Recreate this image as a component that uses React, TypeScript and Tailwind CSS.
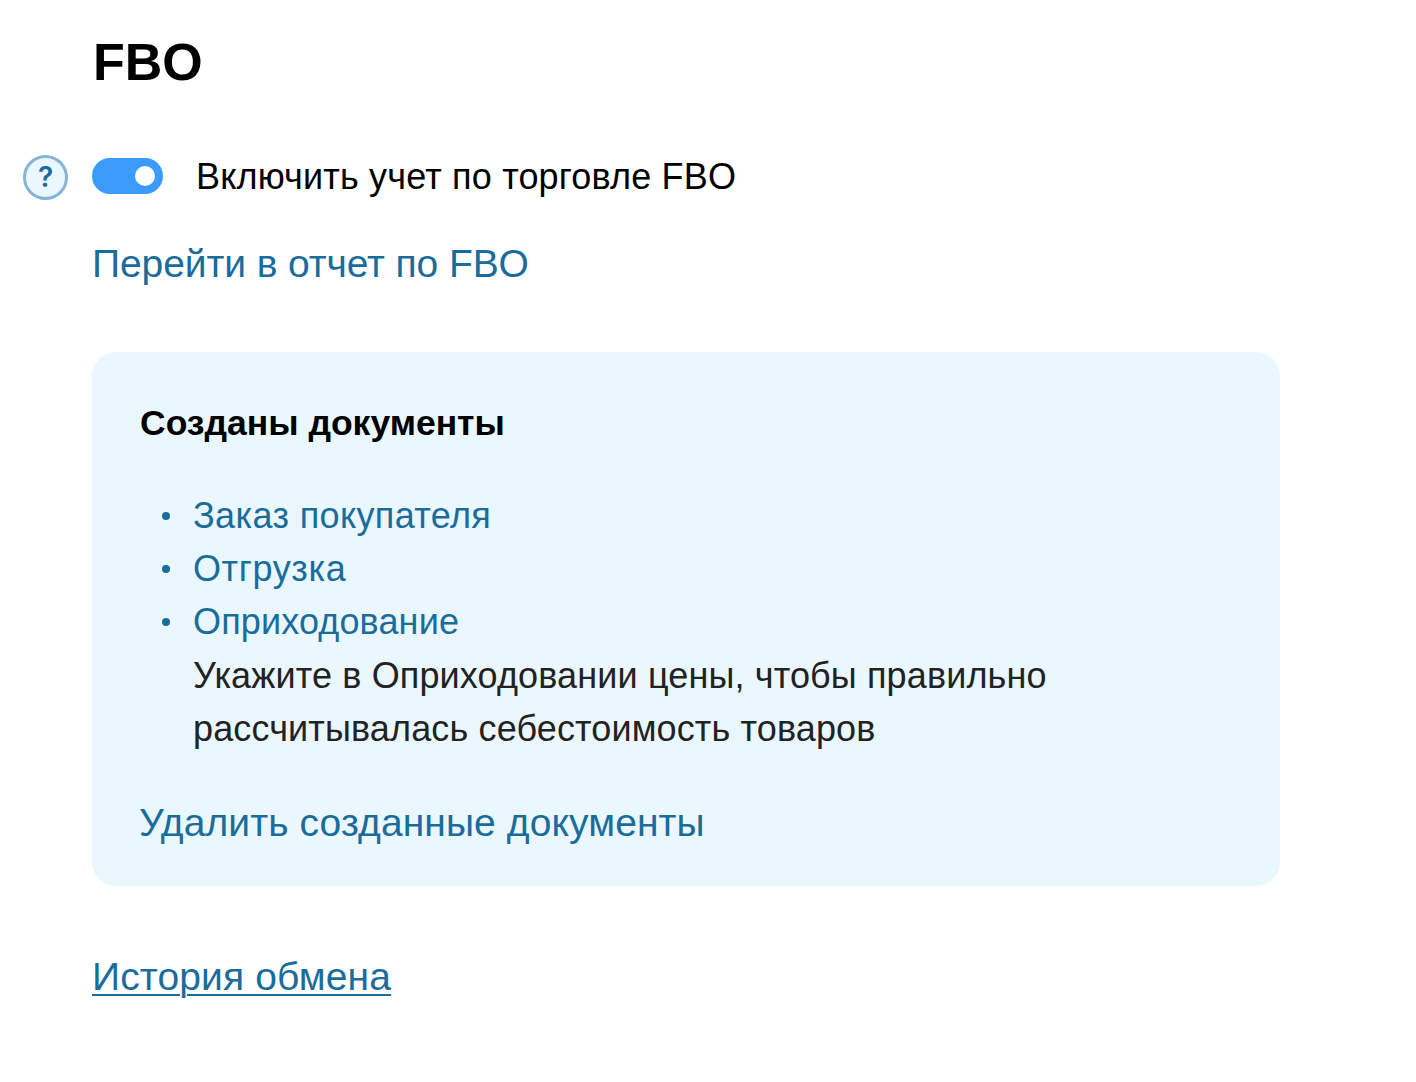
function Bullet({ children, spacing }: { children: string; spacing: string }) {
  return (
    <li className={`relative text-[#1a6c9c] before:absolute before:left-[-31px] before:top-[23px] before:h-[8px] before:w-[8px] before:rounded-full before:bg-[#1a6c9c] ${spacing}`}>
      {children}
    </li>
  );
}

export default function App() {
  return (
    <div className="min-h-[1082px] bg-white pl-[92px] pt-[32px] font-['Liberation_Sans',sans-serif] text-[36px] leading-[53.4px]">
      <h1 className="ml-[1px] text-[52px] font-bold leading-[60px] text-black">FBO</h1>
      <div className="relative mt-[54px] flex h-[60px] items-center">
        <span className="absolute left-[-69px] top-[9px] flex h-[45px] w-[45px] items-center justify-center rounded-full border-[3px] border-[#85b6d3] bg-[#eaf7ff] font-['Inter',sans-serif] text-[28px] font-semibold text-[#1a6c9c]">?</span>
        <span className="flex h-[36px] w-[71px] items-center justify-end rounded-full bg-[#3a9bfd] pr-[8px]">
          <span className="h-[20px] w-[20px] rounded-full bg-white" />
        </span>
        <span className="ml-[33px] translate-y-[1px] tracking-[0.18px] text-black">Включить учет по торговле FBO</span>
      </div>
      <a className="mt-[28px] block text-[39px] leading-[60px] tracking-[-0.09px] text-[#1a6c9c]">Перейти в отчет по FBO</a>
      <div className="mt-[58px] h-[534px] w-[1188px] rounded-[24px] bg-[#eaf7ff] px-[48px] pt-[43px]">
        <h2 className="text-[35.5px] font-bold leading-[56px] text-black">Созданы документы</h2>
        <ul className="mt-[37.6px] pl-[53px] text-[#222]">
          <Bullet spacing="tracking-[0.37px]">Заказ покупателя</Bullet>
          <Bullet spacing="tracking-[0.62px]">Отгрузка</Bullet>
          <Bullet spacing="tracking-[0.14px]">Оприходование</Bullet>
          <li className="tracking-[0.14px]">Укажите в Оприходовании цены, чтобы правильно<br />рассчитывалась себестоимость товаров</li>
        </ul>
        <a className="mt-[37.6px] -ml-[1px] block text-[39px] leading-[60px] tracking-[0.1px] text-[#1a6c9c]">Удалить созданные документы</a>
      </div>
      <a className="mt-[62px] inline-block text-[39px] leading-[58px] tracking-[0.15px] text-[#1a6c9c] underline decoration-2 underline-offset-[4px]">История обмена</a>
    </div>
  );
}
